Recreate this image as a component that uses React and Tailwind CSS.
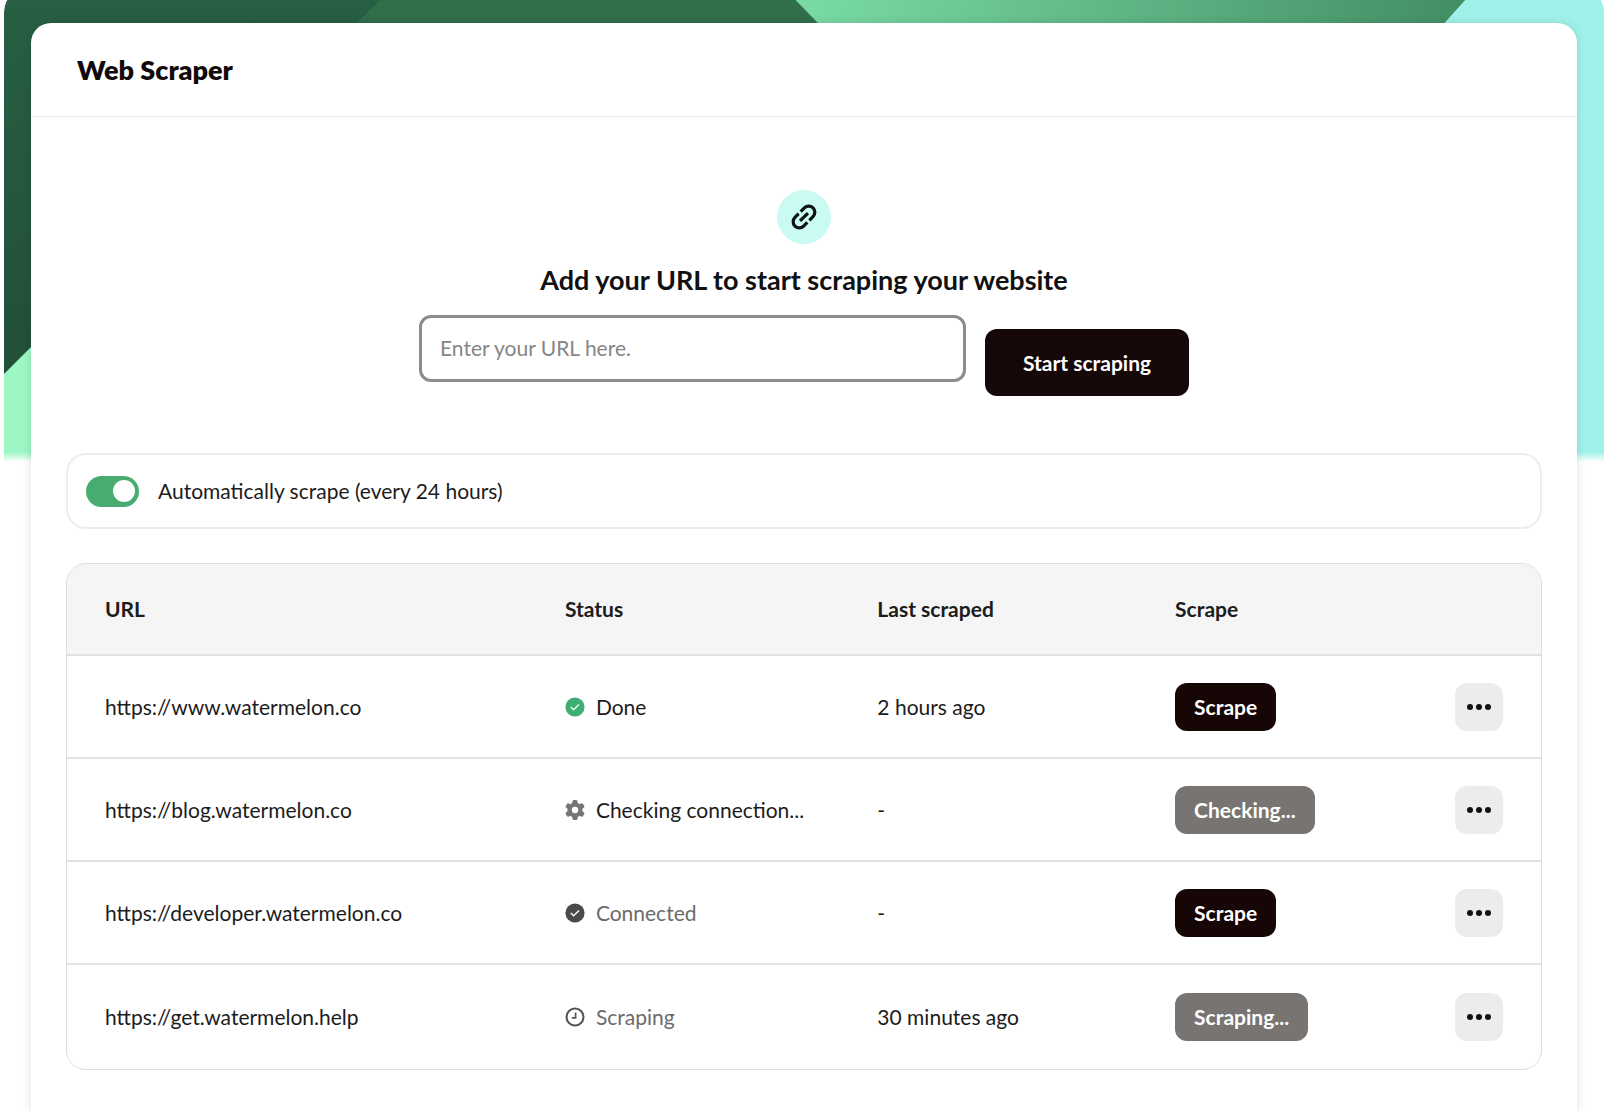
import React, { useState } from "react";

const rows = [
  { url: "https://www.watermelon.co", status: "done", label: "Done", last: "2 hours ago", action: "Scrape" },
  { url: "https://blog.watermelon.co", status: "checking", label: "Checking connection...", last: "-", action: "Checking...", busy: true },
  { url: "https://developer.watermelon.co", status: "connected", label: "Connected", last: "-", action: "Scrape" },
  { url: "https://get.watermelon.help", status: "scraping", label: "Scraping", last: "30 minutes ago", action: "Scraping...", busy: true },
];

function LinkIcon() {
  return (
    <svg viewBox="0 0 24 24" className="size-8 -rotate-45" fill="none" stroke="#0b1211" strokeWidth="2.4" aria-hidden="true">
      <path d="M10.9 16.6H7a4.6 4.6 0 0 1 0-9.2h3.9" />
      <path d="M13.1 7.4H17a4.6 4.6 0 0 1 0 9.2h-3.9" />
      <path d="M7.8 12h8.4" />
    </svg>
  );
}

function CheckIcon({ className }) {
  return (
    <svg viewBox="0 0 20 20" className={className} aria-hidden="true">
      <circle cx="10" cy="10" r="9.6" fill="currentColor" />
      <path d="M5.8 10l2.8 2.7 5.4-5.2" fill="none" stroke="#e6fff4" strokeWidth="1.5" />
    </svg>
  );
}

function GearIcon() {
  return (
    <svg viewBox="0 0 20 20" className="size-5 text-[#767676]" aria-hidden="true">
      <g fill="currentColor">
        <rect x="7.4" y="0" width="5.2" height="20" rx="1.6" />
        <rect x="7.4" y="0" width="5.2" height="20" rx="1.6" transform="rotate(60 10 10)" />
        <rect x="7.4" y="0" width="5.2" height="20" rx="1.6" transform="rotate(120 10 10)" />
        <circle cx="10" cy="10" r="7.6" />
      </g>
      <circle cx="10" cy="10" r="3.2" fill="#fff" />
    </svg>
  );
}

function ClockIcon() {
  return (
    <svg viewBox="0 0 20 20" className="size-5 text-[#555]" fill="none" stroke="currentColor" aria-hidden="true">
      <circle cx="10" cy="10" r="8.5" strokeWidth="2.1" />
      <path d="M10.6 5.6v5.2H6.8" strokeWidth="1.7" />
    </svg>
  );
}

function StatusIcon({ status }) {
  if (status === "done") return <CheckIcon className="size-5 text-[#3fae74]" />;
  if (status === "checking") return <GearIcon />;
  if (status === "connected") return <CheckIcon className="size-5 text-[#4a4a4a]" />;
  return <ClockIcon />;
}

function Backdrop() {
  return (
    <div className="absolute inset-x-1 -top-3 h-[474px] overflow-hidden rounded-t-3xl [mask-image:linear-gradient(to_bottom,black_calc(100%-10px),transparent)]">
      <svg viewBox="0 0 1600 474" preserveAspectRatio="none" className="h-full w-full" aria-hidden="true">
        <defs>
          <linearGradient id="dark" x1="0" y1="0" x2="0" y2="1">
            <stop offset="0" stopColor="#276044" />
            <stop offset="1" stopColor="#224f38" />
          </linearGradient>
          <linearGradient id="band" x1="0" y1="0" x2="1" y2="0">
            <stop offset="0" stopColor="#7bdda6" />
            <stop offset="1" stopColor="#418c62" />
          </linearGradient>
        </defs>
        <rect width="1600" height="474" fill="#9cf7c4" />
        <path d="M0 0h500v60H326L0 386z" fill="url(#dark)" />
        <path d="M388 0h500v60H328z" fill="#316f4b" />
        <path d="M780 0h700v60H838z" fill="url(#band)" />
        <path d="M1472 0h128v474h-60V60h-122z" fill="#9ff2ea" />
      </svg>
    </div>
  );
}

export default function App() {
  const [url, setUrl] = useState("");
  const [auto, setAuto] = useState(true);

  return (
    <div className="relative min-h-screen overflow-hidden bg-white px-[31px] pt-[23px] font-['Lato',sans-serif] text-[21px] leading-7 text-[#1c1c1c]">
      <Backdrop />

      <main className="relative min-h-[1089px] rounded-t-[20px] bg-white shadow-[0_0_10px_rgba(0,0,0,0.12)]">
        <header className="border-b border-[#e8e8e8] px-[46px] py-[29px]">
          <h1 className="text-[27px] leading-[35px] font-extrabold text-[#120a0a]">Web Scraper</h1>
        </header>

        {/* Add URL */}
        <section className="flex flex-col items-center pt-[73px]">
          <div className="flex size-[54px] items-center justify-center rounded-full bg-[#c9fbf3]">
            <LinkIcon />
          </div>
          <h2 className="mt-[18px] text-[27px] leading-9 font-bold text-[#111]">
            <label htmlFor="url">Add your URL to start scraping your website</label>
          </h2>
          <form className="mt-[17px] flex items-start gap-[19px]" onSubmit={(e) => e.preventDefault()}>
            <input
              id="url"
              type="url"
              value={url}
              onChange={(e) => setUrl(e.target.value)}
              placeholder="Enter your URL here."
              className="h-[67px] w-[547px] rounded-xl border-[3px] border-[#8c8c8c] bg-white px-[18px] pb-0.5 placeholder:text-[#868686]"
            />
            <button type="submit" className="mt-3.5 h-[67px] w-[204px] rounded-xl bg-[#160808] font-bold text-white">
              Start scraping
            </button>
          </form>
        </section>

        <div className="px-[35px] pt-[57px]">
          {/* Auto scrape */}
          <label className="flex h-[76px] items-center gap-[19px] rounded-[20px] border-2 border-[#ededed] px-[18px]">
            <input type="checkbox" role="switch" className="peer sr-only" checked={auto} onChange={() => setAuto(!auto)} />
            <span className="flex h-[31px] w-[53px] items-center rounded-full bg-gray-300 px-1 peer-checked:justify-end peer-checked:bg-[#48ac71]">
              <span className="size-[22px] rounded-full bg-white" />
            </span>
            Automatically scrape (every 24 hours)
          </label>

          {/* Scraped URLs */}
          <div className="mt-[34px] overflow-hidden rounded-[20px] border border-[#dedede]">
            <table className="w-full table-fixed text-left">
              <thead>
                <tr className="h-[91px] bg-[#f5f5f5]">
                  <th className="w-[31.2%] pl-[38px] font-bold">URL</th>
                  <th className="w-[21.2%] pl-[38px] font-bold">Status</th>
                  <th className="w-[20.2%] pl-[38px] font-bold">Last scraped</th>
                  <th className="pl-[38px] font-bold">Scrape</th>
                  <th className="w-[120px]" aria-label="Options" />
                </tr>
              </thead>
              <tbody>
                {rows.map((row) => (
                  <tr key={row.url} className="h-[103px] border-t-2 border-[#e2e2e2] last:h-[105px]">
                    <td className="pl-[38px]">{row.url}</td>
                    <td className="pl-[38px]">
                      <span className="flex items-center gap-[11px]">
                        <StatusIcon status={row.status} />
                        <span className={row.status === "connected" || row.status === "scraping" ? "text-[#6b6b6b]" : ""}>
                          {row.label}
                        </span>
                      </span>
                    </td>
                    <td className="pl-[38px]">{row.last}</td>
                    <td className="pl-[38px]">
                      <button
                        type="button"
                        disabled={row.busy}
                        className="h-12 rounded-xl bg-[#160606] px-[19px] font-bold text-white disabled:bg-[#787472]"
                      >
                        {row.action}
                      </button>
                    </td>
                    <td className="pr-[38px]">
                      <button
                        type="button"
                        aria-label="More options"
                        className="ml-auto flex size-12 items-center justify-center gap-[3px] rounded-xl bg-[#ebeded]"
                      >
                        <span className="size-1.5 rounded-full bg-[#111]" />
                        <span className="size-1.5 rounded-full bg-[#111]" />
                        <span className="size-1.5 rounded-full bg-[#111]" />
                      </button>
                    </td>
                  </tr>
                ))}
              </tbody>
            </table>
          </div>
        </div>
      </main>
    </div>
  );
}
